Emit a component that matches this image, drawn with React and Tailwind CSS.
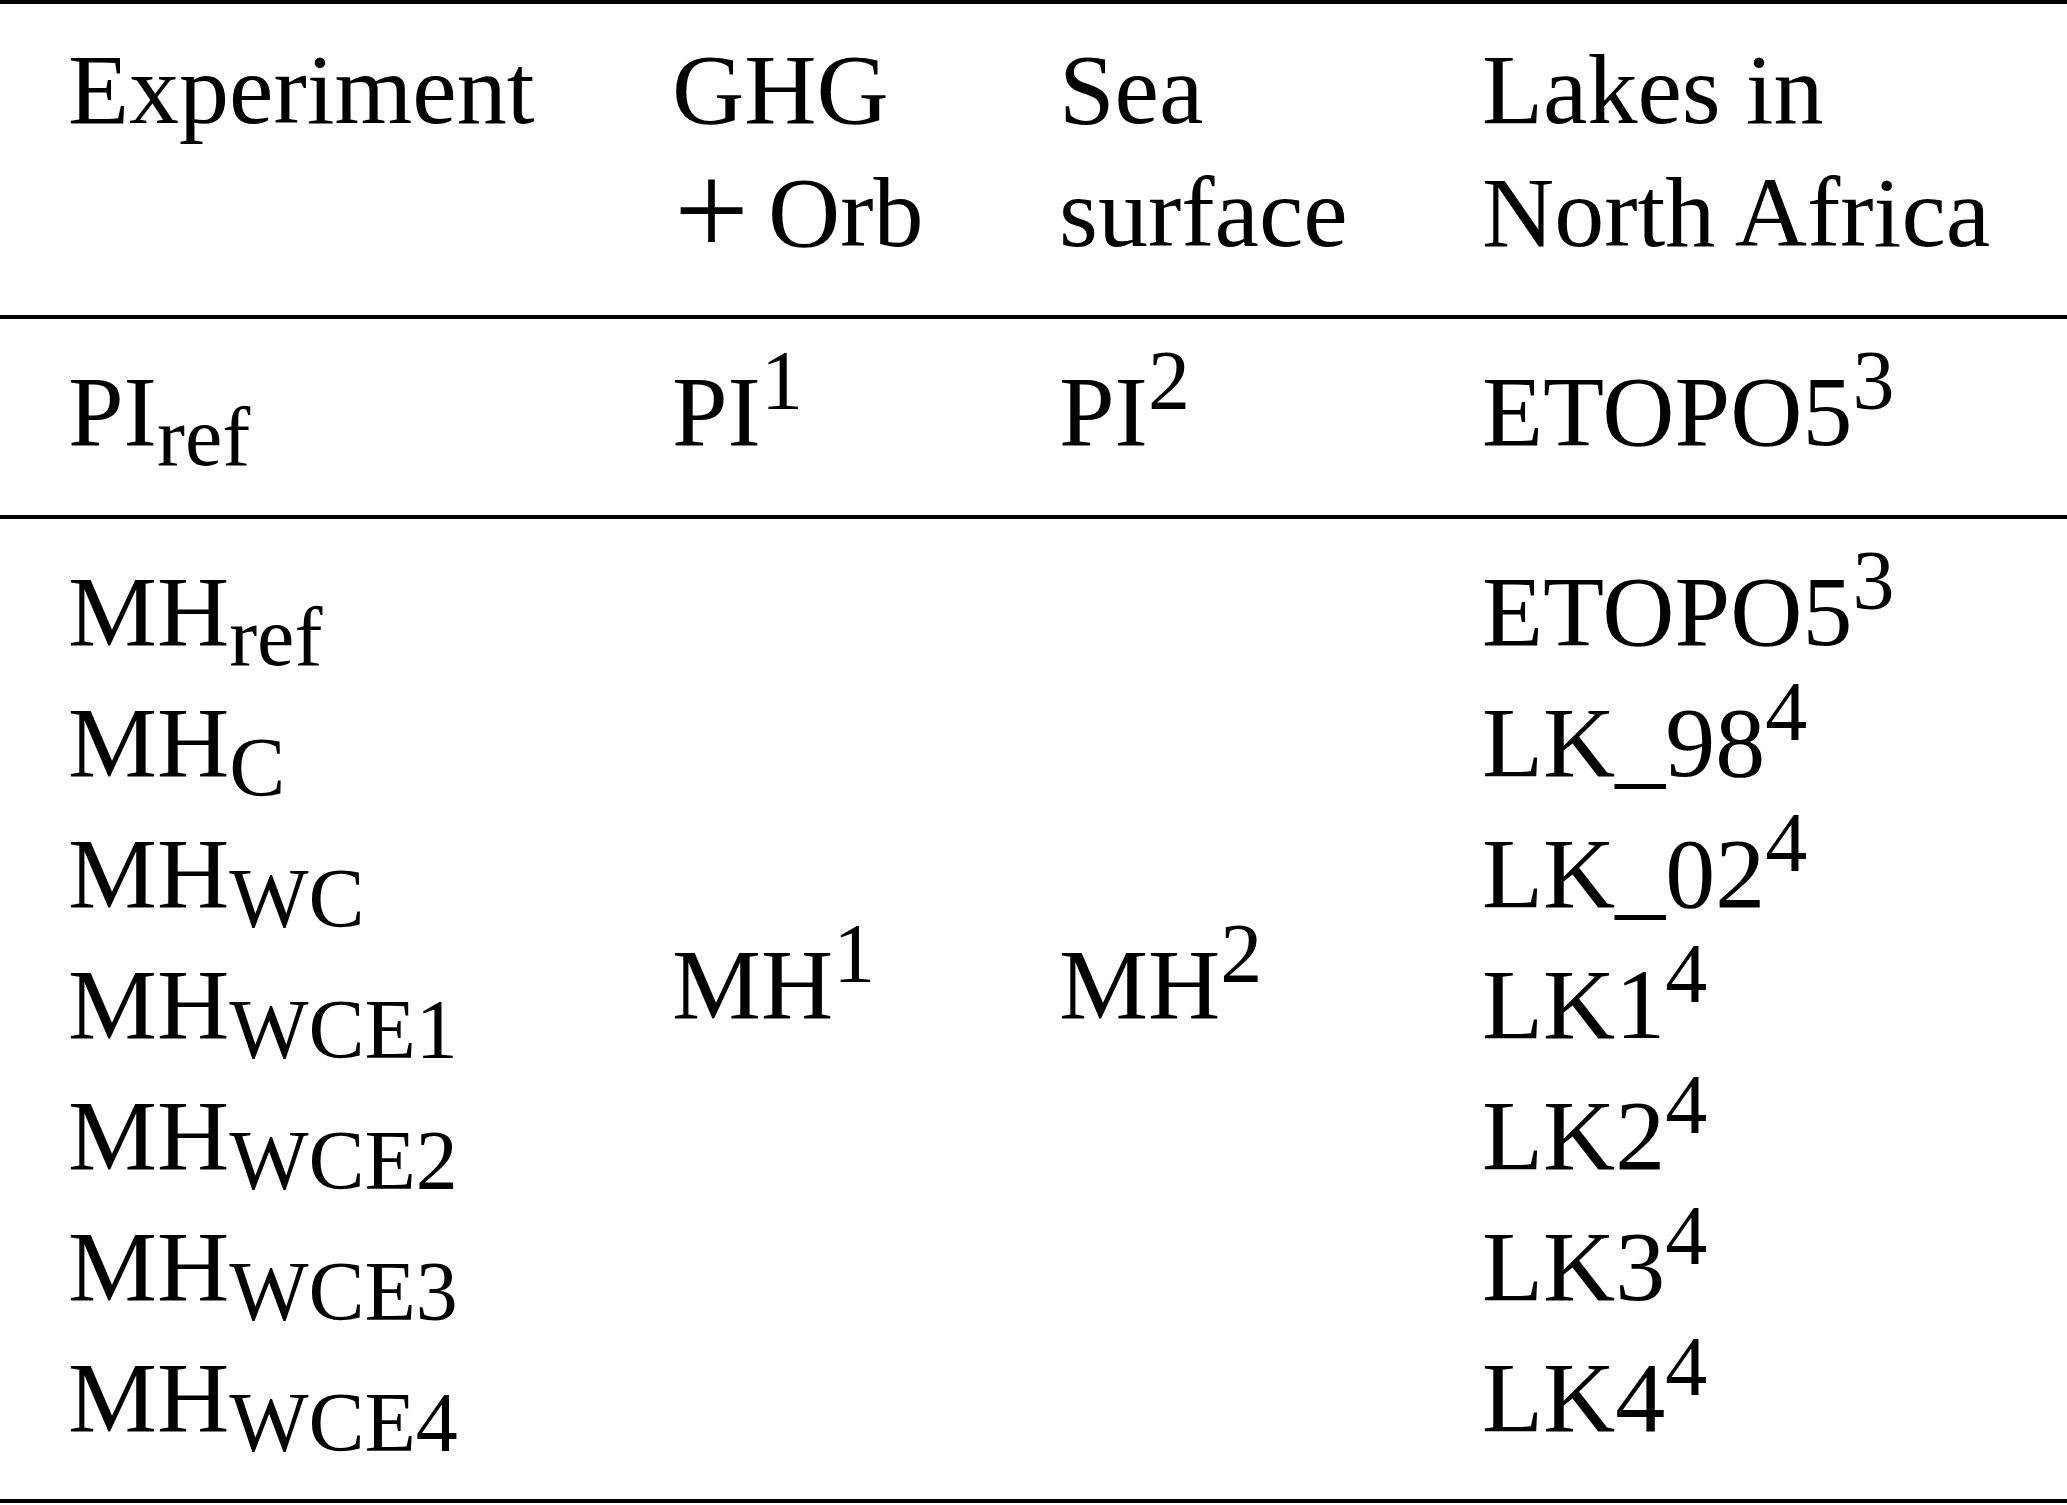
export default function App() {
  const cols = "grid grid-cols-[604px_387px_423px_1fr] pl-[68px]";
  const Sub = ({ children }) => (
    <span className="relative top-[20px] text-[84px] leading-[0]">{children}</span>
  );
  const Sup = ({ children }) => (
    <span className="relative top-[-36px] text-[84px] leading-[0]">{children}</span>
  );
  const body = [
    ["ref", "ETOPO5", "3"],
    ["C", "LK_98", "4"],
    ["WC", "LK_02", "4"],
    ["WCE1", "LK1", "4"],
    ["WCE2", "LK2", "4"],
    ["WCE3", "LK3", "4"],
    ["WCE4", "LK4", "4"],
  ];
  return (
    <div className="w-[2067px] h-[1505px] bg-white text-black font-['Liberation_Serif',serif] text-[100px] whitespace-nowrap">
      <div className="border-t-4 border-b-4 border-black h-[319px] pt-[24px]">
        <div className={cols + " leading-[123px]"}>
          <div>Experiment</div>
          <div>
            <div>GHG</div>
            <div>
              <span className="relative top-[9px] ml-[2px] text-[133px] leading-[0]">+</span>
              <span className="text-[76px] leading-[0]"> </span>
              <span>Orb</span>
            </div>
          </div>
          <div>
            <div>Sea</div>
            <div>surface</div>
          </div>
          <div>
            <div>Lakes in</div>
            <div>North Africa</div>
          </div>
        </div>
      </div>
      <div className="border-b-4 border-black h-[200px] pt-[31px]">
        <div className={cols + " leading-[123px]"}>
          <div>
            PI<Sub>ref</Sub>
          </div>
          <div>
            PI<Sup>1</Sup>
          </div>
          <div>
            PI<Sup>2</Sup>
          </div>
          <div>
            ETOPO5<Sup>3</Sup>
          </div>
        </div>
      </div>
      <div className="border-b-4 border-black h-[984px] pt-[27px]">
        <div className={cols + " leading-[131px]"}>
          <div>
            {body.map((r) => (
              <div key={r[0]}>
                MH<Sub>{r[0]}</Sub>
              </div>
            ))}
          </div>
          <div className="pt-[373px]">
            MH<Sup>1</Sup>
          </div>
          <div className="pt-[373px]">
            MH<Sup>2</Sup>
          </div>
          <div>
            {body.map((r) => (
              <div key={r[1]}>
                {r[1]}
                <Sup>{r[2]}</Sup>
              </div>
            ))}
          </div>
        </div>
      </div>
    </div>
  );
}
